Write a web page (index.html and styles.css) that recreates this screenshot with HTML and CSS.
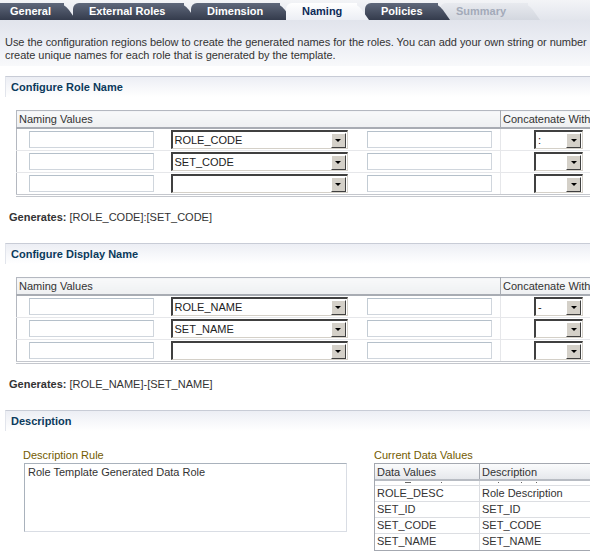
FILE: index.html
```html
<!DOCTYPE html>
<html>
<head>
<meta charset="utf-8">
<link rel="stylesheet" href="styles.css">
</head>
<body>
<div class="page">
  <div class="tabs">
    <div class="tab t-general">General</div>
    <div class="tab t-ext">External Roles</div>
    <div class="tab t-dim">Dimension</div>
    <div class="tab t-naming active">Naming</div>
    <div class="tab t-pol">Policies</div>
    <div class="tab t-sum disabled">Summary</div>
  </div>
  <div class="intro">Use the configuration regions below to create the generated names for the roles. You can add your own string or number<br>create unique names for each role that is generated by the template.</div>

  <div class="section-head">Configure Role Name</div>
  <table class="naming">
    <colgroup><col class="c1"><col class="c2"><col class="c3"><col class="c4"></colgroup>
    <thead>
      <tr><th colspan="3">Naming Values</th><th class="cw">Concatenate With</th></tr>
    </thead>
    <tbody>
      <tr>
        <td class="d1"><div class="txt"></div></td>
        <td class="d2"><div class="sel wide"><span class="val">ROLE_CODE</span><span class="btn"><i></i></span></div></td>
        <td class="d3"><div class="txt"></div></td>
        <td class="d4"><div class="sel small"><span class="val">:</span><span class="btn"><i></i></span></div></td>
      </tr>
      <tr>
        <td class="d1"><div class="txt"></div></td>
        <td class="d2"><div class="sel wide"><span class="val">SET_CODE</span><span class="btn"><i></i></span></div></td>
        <td class="d3"><div class="txt"></div></td>
        <td class="d4"><div class="sel small"><span class="val"></span><span class="btn"><i></i></span></div></td>
      </tr>
      <tr>
        <td class="d1"><div class="txt"></div></td>
        <td class="d2"><div class="sel wide"><span class="val"></span><span class="btn"><i></i></span></div></td>
        <td class="d3"><div class="txt"></div></td>
        <td class="d4"><div class="sel small"><span class="val"></span><span class="btn"><i></i></span></div></td>
      </tr>
    </tbody>
  </table>
  <div class="generates"><b>Generates:</b> [ROLE_CODE]:[SET_CODE]</div>

  <div class="section-head">Configure Display Name</div>
  <table class="naming">
    <colgroup><col class="c1"><col class="c2"><col class="c3"><col class="c4"></colgroup>
    <thead>
      <tr><th colspan="3">Naming Values</th><th class="cw">Concatenate With</th></tr>
    </thead>
    <tbody>
      <tr>
        <td class="d1"><div class="txt"></div></td>
        <td class="d2"><div class="sel wide"><span class="val">ROLE_NAME</span><span class="btn"><i></i></span></div></td>
        <td class="d3"><div class="txt"></div></td>
        <td class="d4"><div class="sel small"><span class="val">-</span><span class="btn"><i></i></span></div></td>
      </tr>
      <tr>
        <td class="d1"><div class="txt"></div></td>
        <td class="d2"><div class="sel wide"><span class="val">SET_NAME</span><span class="btn"><i></i></span></div></td>
        <td class="d3"><div class="txt"></div></td>
        <td class="d4"><div class="sel small"><span class="val"></span><span class="btn"><i></i></span></div></td>
      </tr>
      <tr>
        <td class="d1"><div class="txt"></div></td>
        <td class="d2"><div class="sel wide"><span class="val"></span><span class="btn"><i></i></span></div></td>
        <td class="d3"><div class="txt"></div></td>
        <td class="d4"><div class="sel small"><span class="val"></span><span class="btn"><i></i></span></div></td>
      </tr>
    </tbody>
  </table>
  <div class="generates"><b>Generates:</b> [ROLE_NAME]-[SET_NAME]</div>

  <div class="section-head">Description</div>
  <div class="desc">
    <div class="rule">
      <div class="label">Description Rule</div>
      <div class="area">Role Template Generated Data Role</div>
    </div>
    <div class="current">
      <div class="label">Current Data Values</div>
      <div class="dtable">
        <div class="drow dhead"><span class="dc1">Data Values</span><span class="dc2">Description</span></div>
        <div class="drow dpart"><span class="dc1"><i class="m m1"></i><i class="m m2"></i></span><span class="dc2"><i class="m m3"></i><i class="m m4"></i><i class="m m5"></i></span></div>
        <div class="drow"><span class="dc1">ROLE_DESC</span><span class="dc2">Role Description</span></div>
        <div class="drow"><span class="dc1">SET_ID</span><span class="dc2">SET_ID</span></div>
        <div class="drow"><span class="dc1">SET_CODE</span><span class="dc2">SET_CODE</span></div>
        <div class="drow"><span class="dc1">SET_NAME</span><span class="dc2">SET_NAME</span></div>
      </div>
    </div>
  </div>
</div>
</body>
</html>
```
FILE: styles.css
```css
html, body {
  margin: 0;
  padding: 0;
  background: #fff;
  overflow: hidden;
}
body {
  font-family: "Liberation Sans", Arial, sans-serif;
  font-size: 11px;
  color: #333;
}
.page {
  width: 590px;
  height: 556px;
  overflow: hidden;
}

/* Tabs */
.tabs {
  display: flex;
  height: 20px;
  box-sizing: border-box;
  padding-top: 3px;
  background: linear-gradient(#f3f4f7, #e2e5ec);
  overflow: hidden;
}
.tab {
  position: relative;
  height: 17px;
  line-height: 17px;
  box-sizing: border-box;
  padding-left: 16px;
  font-weight: bold;
  font-size: 11px;
  color: #fff;
  background: linear-gradient(#5f687b, #343b4c);
  border-radius: 6px 0 0 0;
  white-space: nowrap;
}
.tab::after {
  content: "";
  position: absolute;
  z-index: -1;
  top: 0;
  left: calc(100% - 12px);
  width: 24px;
  height: 17px;
  background: inherit;
  border-radius: 0 7px 0 0;
  transform: skewX(35deg);
  transform-origin: bottom left;
}
.t-general { width: 70px; margin-left: -6px; z-index: 6; }
.t-ext { width: 111px; margin-left: 9px; z-index: 5; }
.t-dim { width: 89px; margin-left: 7px; z-index: 4; }
.t-naming { width: 71px; margin-left: 6px; z-index: 9; }
.t-pol { width: 73px; margin-left: 8px; z-index: 3; }
.t-sum { width: 88px; margin-left: 2px; z-index: 2; }
.tab.active {
  color: #0c2a58;
  background: linear-gradient(#ffffff, #eceef4);
}
.tab.disabled {
  color: #a3aab9;
  background: linear-gradient(#e8eaef, #d3d7df);
}

/* Intro */
.intro {
  height: 46px;
  box-sizing: border-box;
  padding: 16px 0 0 5px;
  line-height: 13px;
  letter-spacing: -0.04px;
  color: #333;
  background: linear-gradient(#e1e4ec, #eceef4 50%, #f8f9fb);
  white-space: nowrap;
}

/* Section headers */
.section-head {
  margin: 10px 0 0 5px;
  height: 21px;
  box-sizing: border-box;
  padding: 4px 0 0 5px;
  border-top: 1px solid #c8ccd6;
  border-left: 1px solid #e2e5ec;
  background: linear-gradient(#eceef4, #f6f7fa 50%, #fff);
  font-weight: bold;
  color: #0b3a5c;
}

/* Naming tables */
.naming {
  margin: 13px 0 0 16px;
  width: 600px;
  border-collapse: collapse;
  table-layout: fixed;
  border-left: 1px solid #b4b8c0;
  border-top: 1px solid #b4b8c0;
  border-bottom: 3px double #c4c7cd;
}
.naming .c1 { width: 144px; }
.naming .c2 { width: 196px; }
.naming .c3 { width: 144px; }
.naming th {
  height: 16px;
  padding: 0 0 0 2px;
  text-align: left;
  font-weight: normal;
  color: #333;
  background: linear-gradient(#f8f9fa, #eef0f2);
  border-bottom: 2px solid #a8acb3;
}
.naming th.cw {
  border-left: 1px solid #a8acb3;
}
.naming td {
  height: 21px;
  padding: 0;
  border-bottom: 1px solid #e6e7ea;
}
.naming tr:last-child td { border-bottom: none; }
.naming td.d4 { border-left: 1px solid #e6e7ea; }
.naming .d1 .txt { margin-left: 12px; }
.naming .d2 .sel { margin-left: 10px; }
.naming .d3 .txt { margin-left: 10px; }
.naming .d4 .sel { margin-left: 33px; }

.txt {
  width: 125px;
  height: 17px;
  box-sizing: border-box;
  border: 1px solid #d0d6dd;
  border-top-color: #b5c0ca;
  border-left-color: #c3ccd4;
  background: #fff;
}
.sel {
  display: flex;
  align-items: center;
  height: 19px;
  box-sizing: border-box;
  border-top: 2px solid #404040;
  border-left: 2px solid #404040;
  border-right: 1px solid #d4d0c8;
  border-bottom: 1px solid #d4d0c8;
  box-shadow: 1px 1px 0 #fff;
  background: #fff;
}
.sel.wide { width: 177px; }
.sel.small { width: 49px; }
.sel .val {
  flex: 1;
  padding-left: 2px;
  line-height: 15px;
  color: #222;
  overflow: hidden;
  white-space: nowrap;
}
.sel .btn {
  width: 15px;
  height: 15px;
  margin-right: 1px;
  box-sizing: border-box;
  background: #d4d0c8;
  border-top: 1px solid #fff;
  border-left: 1px solid #fff;
  border-right: 1px solid #404040;
  border-bottom: 1px solid #404040;
  display: flex;
  align-items: center;
  justify-content: center;
}
.sel .btn i {
  display: block;
  width: 0;
  height: 0;
  border-left: 3px solid transparent;
  border-right: 3px solid transparent;
  border-top: 3px solid #000;
  margin-top: 1px;
}

.generates {
  margin: 14px 0 0 9px;
  line-height: 13px;
  color: #333;
}
.generates b { color: #333; }
.generates + .section-head { margin-top: 19px; }

/* Description */
.desc {
  display: flex;
  margin-top: 18px;
}
.label {
  color: #735b00;
  line-height: 13px;
  height: 14px;
}
.rule {
  margin-left: 23px;
  width: 324px;
}
.area {
  margin-left: 1px;
  width: 323px;
  height: 69px;
  box-sizing: border-box;
  border: 1px solid #d9dde4;
  border-top-color: #a9b2bc;
  border-left-color: #a9b2bc;
  padding: 2px 3px;
  line-height: 13px;
  color: #333;
}
.current {
  margin-left: 27px;
}
.dtable {
  width: 240px;
  border-left: 1px solid #a4a8b0;
  border-top: 1px solid #a4a8b0;
  border-bottom: 1px solid #a4a8b0;
}
.drow {
  display: flex;
  height: 16px;
  line-height: 15px;
  box-sizing: border-box;
  border-bottom: 1px solid #dcdee2;
}
.drow span {
  padding-left: 2px;
  box-sizing: border-box;
  overflow: hidden;
  white-space: nowrap;
}
.dc1 { width: 105px; border-right: 1px solid #dcdee2; }
.dc2 { flex: 1; }
.dhead {
  height: 17px;
  line-height: 16px;
  background: linear-gradient(#fafbfc, #e6e8ec);
  border-bottom: 2px solid #b8bcc3;
}
.dhead .dc1 { border-right: 1px solid #a4a8b0; }
.dpart {
  height: 5px;
  line-height: 5px;
}
.dpart span {
  display: flex;
  align-items: flex-start;
}
.m {
  display: block;
  height: 1px;
  background: #666;
  margin-top: 1px;
}
.m1 { width: 6px; margin-left: 28px; }
.m2 { width: 1px; margin-left: 30px; }
.m3 { width: 1px; margin-left: 16px; }
.m4 { width: 1px; margin-left: 22px; }
.m5 { width: 1px; margin-left: 14px; }
.drow:last-child { border-bottom: none; }
```
